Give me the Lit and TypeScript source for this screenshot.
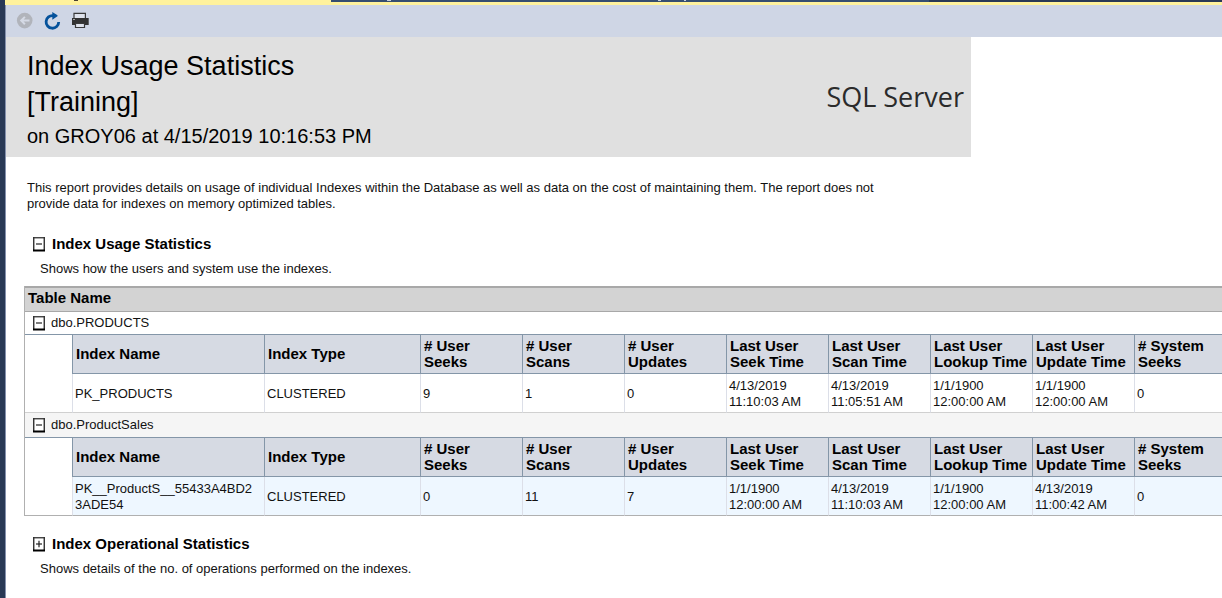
import { LitElement, html, svg, css, nothing } from "lit";
import { customElement, property, state } from "lit/decorators.js";
import { classMap } from "lit/directives/class-map.js";

interface IndexRow {
  name: string;
  type: string;
  values: string[][];
}

interface TableGroup {
  name: string;
  rows: IndexRow[];
}

const COLUMNS: string[][] = [
  ["Index Name"],
  ["Index Type"],
  ["# User", "Seeks"],
  ["# User", "Scans"],
  ["# User", "Updates"],
  ["Last User", "Seek Time"],
  ["Last User", "Scan Time"],
  ["Last User", "Lookup Time"],
  ["Last User", "Update Time"],
  ["# System", "Seeks"],
];

const GROUPS: TableGroup[] = [
  {
    name: "dbo.PRODUCTS",
    rows: [
      {
        name: "PK_PRODUCTS",
        type: "CLUSTERED",
        values: [
          ["9"],
          ["1"],
          ["0"],
          ["4/13/2019", "11:10:03 AM"],
          ["4/13/2019", "11:05:51 AM"],
          ["1/1/1900", "12:00:00 AM"],
          ["1/1/1900", "12:00:00 AM"],
          ["0"],
        ],
      },
    ],
  },
  {
    name: "dbo.ProductSales",
    rows: [
      {
        name: "PK__ProductS__55433A4BD23ADE54",
        type: "CLUSTERED",
        values: [
          ["0"],
          ["11"],
          ["7"],
          ["1/1/1900", "12:00:00 AM"],
          ["4/13/2019", "11:10:03 AM"],
          ["1/1/1900", "12:00:00 AM"],
          ["4/13/2019", "11:00:42 AM"],
          ["0"],
        ],
      },
    ],
  },
];

const lines = (parts: string[]) =>
  parts.map((part, i) => (i ? html`<br />${part}` : part));

@customElement("expand-toggle")
class ExpandToggle extends LitElement {
  @property({ type: Boolean }) open = false;
  @property() label = "";

  static styles = css`
    :host {
      display: block;
      flex: none;
    }
    button {
      display: block;
      padding: 0;
      border: 0;
      background: none;
      cursor: pointer;
    }
    svg {
      display: block;
    }
  `;

  render() {
    return html`<button aria-label=${this.label} aria-expanded=${this.open ? "true" : "false"}>
      <svg width="12" height="15" viewBox="0 0 12 15">
        <rect x="1" y="1" width="10" height="12" fill="#fff" />
        <path d="M.75 0V14M11.25 0V14" stroke="#222" stroke-width="1.3" />
        <path d="M0 .75H12" stroke="#333" stroke-width="1.3" />
        <path d="M0 13.5H12" stroke="#000" stroke-width="2" />
        <path d="M3 7H9" stroke="#222" stroke-width="1.2" />
        ${this.open ? nothing : svg`<path d="M6 3.7V10.3" stroke="#222" stroke-width="1.2" />`}
      </svg>
    </button>`;
  }
}

@customElement("report-toolbar")
class ReportToolbar extends LitElement {
  static styles = css`
    :host {
      display: flex;
      align-items: center;
      gap: 8px;
      height: 32px;
      padding: 0 10px;
      background: #cfd6e5;
    }
    button {
      display: block;
      width: 20px;
      height: 20px;
      padding: 0;
      border: 0;
      background: none;
    }
    svg {
      display: block;
    }
  `;

  render() {
    return html`
      <button aria-label="Back" disabled>
        <svg width="20" height="20" viewBox="0 0 20 20">
          <circle cx="8.7" cy="9.6" r="7.8" fill="#b1b4bb" />
          <path d="M13.5 9.6H5.5M8.9 5.9L5.2 9.6L8.9 13.3" fill="none" stroke="#d5dae5" stroke-width="2" />
        </svg>
      </button>
      <button aria-label="Refresh">
        <svg width="20" height="20" viewBox="0 0 20 20">
          <path d="M9.3 4.7A6.3 6.3 0 1 0 14.7 11" fill="none" stroke="#05529b" stroke-width="2.8" />
          <path d="M8.3 1L13.5 4.2V5.2L8.3 8.7Z" fill="#05529b" />
        </svg>
      </button>
      <button aria-label="Print">
        <svg width="20" height="20" viewBox="0 0 20 20">
          <path d="M2 7V2.4H13.4V7" fill="#dfe3ec" stroke="#3a3a3a" stroke-width="1.2" />
          <path d="M-1 7H16.7V14H-1Z" fill="#333" />
          <path d="M1 8.5H3" stroke="#aaa" stroke-width="1" />
          <path d="M3.5 12.5H12.5V16.5H3.5Z" fill="#dfe3ec" stroke="#3a3a3a" stroke-width="1.2" />
        </svg>
      </button>
    `;
  }
}

@customElement("app-root")
class AppRoot extends LitElement {
  @state() private collapsed = new Set<string>();
  @state() private usageOpen = true;

  static styles = css`
    :host {
      display: block;
      box-sizing: border-box;
      min-height: 100vh;
      overflow: hidden;
      background: #fff;
      border-left: 5px solid #293955;
      color: #111;
      font: 13px/16px "Liberation Sans", Arial, sans-serif;
    }
    .tabs {
      display: flex;
      height: 2px;
      background: #364e6f;
      border-bottom: 3px solid #fff29d;
    }
    .tab-active {
      width: 326px;
      background: #fff29d;
    }
    .tab-idle {
      width: 598px;
    }
    .tab-rest {
      flex: 1;
      background: #293955;
    }
    .tabs svg {
      display: block;
    }
    .page {
      box-sizing: border-box;
      min-height: calc(100vh - 5px);
      border-left: 1px solid #8591ad;
    }
    .banner {
      display: flex;
      align-items: center;
      justify-content: space-between;
      box-sizing: border-box;
      max-width: 965px;
      height: 120px;
      padding: 0 7px 0 21px;
      background: #e0e0e0;
    }
    .banner-text {
      padding-top: 6px;
    }
    .banner h1,
    .banner p {
      margin: 0;
      font-weight: 400;
      color: #000;
    }
    .banner h1 {
      font-size: 27px;
      line-height: 36px;
    }
    .banner p {
      font-size: 20px;
      line-height: 32px;
    }
    .brand {
      font: 27px/36px "Open Sans", sans-serif;
      color: #2b2b2b;
    }
    .intro {
      max-width: 880px;
      margin: 23px 0 24px 21px;
    }
    .section-title {
      display: flex;
      align-items: center;
      gap: 7px;
      margin: 0 0 9px 27px;
      font-size: 15px;
      line-height: 16px;
      color: #000;
    }
    .section-note {
      margin: 0 0 9px 34px;
    }
    .data {
      width: calc(100% - 18px);
      margin: 0 0 20px 18px;
      table-layout: fixed;
      border-collapse: separate;
      border-spacing: 0;
      border-left: 1px solid #b0b0b0;
    }
    .col-indent {
      width: 47px;
    }
    .col-name {
      width: 192px;
    }
    .col-type {
      width: 156px;
    }
    .col-value {
      width: 102px;
    }
    th,
    td {
      box-sizing: border-box;
      padding: 0 0 0 3px;
      text-align: left;
      vertical-align: middle;
    }
    th {
      font-size: 15px;
      color: #000;
    }
    .title th {
      height: 26px;
      padding-bottom: 3px;
      background: #d3d3d3;
      border-top: 2px solid #a8a8a8;
      border-bottom: 1px solid #a8a8a8;
    }
    .group td {
      height: 23px;
      padding-left: 8px;
      border-bottom: 1px solid #8496a8;
    }
    .group.alt td {
      height: 25px;
      background: #f5f5f5;
    }
    .group-name {
      display: flex;
      align-items: center;
      gap: 6px;
    }
    .heads th {
      height: 39px;
      background: #d6dae3;
      border-left: 1px solid #8496a8;
      border-bottom: 1px solid #8496a8;
    }
    .record td {
      height: 39px;
      padding: 2px 6px 0 2px;
      overflow-wrap: anywhere;
      border-left: 1px solid #dcdfe8;
      border-bottom: 1px solid #d0d0d0;
    }
    .record.alt td {
      background: #eef7ff;
      border-bottom-color: #b0b0b0;
    }
    .heads .indent,
    .record .indent,
    .record.alt .indent {
      background: #fff;
      border-left: 0;
    }
    .heads .indent {
      border-bottom: 0;
    }
  `;

  private toggleGroup(name: string) {
    const next = new Set(this.collapsed);
    next.has(name) ? next.delete(name) : next.add(name);
    this.collapsed = next;
  }

  private renderGroup(group: TableGroup, index: number) {
    const alt = index % 2 === 1;
    const open = !this.collapsed.has(group.name);
    return html`
      <tr class=${classMap({ group: true, alt })}>
        <td colspan="11">
          <div class="group-name">
            <expand-toggle
              .open=${open}
              .label=${group.name}
              @click=${() => this.toggleGroup(group.name)}
            ></expand-toggle>
            <span>${group.name}</span>
          </div>
        </td>
      </tr>
      ${open
        ? html`
            <tr class="heads">
              <td class="indent"></td>
              ${COLUMNS.map((c) => html`<th scope="col">${lines(c)}</th>`)}
            </tr>
            ${group.rows.map(
              (row) => html`<tr class=${classMap({ record: true, alt })}>
                <td class="indent"></td>
                <td>${row.name}</td>
                <td>${row.type}</td>
                ${row.values.map((v) => html`<td>${lines(v)}</td>`)}
              </tr>`
            )}
          `
        : nothing}
    `;
  }

  render() {
    return html`
      <div class="tabs">
        <div class="tab-active">
          <svg width="326" height="2"><path d="M69 .5H73" stroke="#4a4030" /></svg>
        </div>
        <div class="tab-idle">
          <svg width="598" height="2">
            <path d="M56 .5H60M327 .5H330M353 .5H355" stroke="#c8d0dc" />
          </svg>
        </div>
        <div class="tab-rest"></div>
      </div>
      <div class="page">
        <report-toolbar></report-toolbar>
        <header class="banner">
          <div class="banner-text">
            <h1>Index Usage Statistics<br />[Training]</h1>
            <p>on GROY06 at 4/15/2019 10:16:53 PM</p>
          </div>
          <div class="brand">SQL Server</div>
        </header>
        <p class="intro">
          This report provides details on usage of individual Indexes within the Database as well as
          data on the cost of maintaining them. The report does not provide data for indexes on
          memory optimized tables.
        </p>
        <h2 class="section-title">
          <expand-toggle
            .open=${this.usageOpen}
            label="Index Usage Statistics"
            @click=${() => (this.usageOpen = !this.usageOpen)}
          ></expand-toggle>
          Index Usage Statistics
        </h2>
        <p class="section-note">Shows how the users and system use the indexes.</p>
        ${this.usageOpen
          ? html`<table class="data">
              <colgroup>
                <col class="col-indent" />
                <col class="col-name" />
                <col class="col-type" />
                ${COLUMNS.slice(3).map(() => html`<col class="col-value" />`)}
                <col />
              </colgroup>
              <tbody>
                <tr class="title">
                  <th colspan="11">Table Name</th>
                </tr>
                ${GROUPS.map((g, i) => this.renderGroup(g, i))}
              </tbody>
            </table>`
          : nothing}
        <h2 class="section-title">
          <expand-toggle label="Index Operational Statistics"></expand-toggle>
          Index Operational Statistics
        </h2>
        <p class="section-note">
          Shows details of the no. of operations performed on the indexes.
        </p>
      </div>
    `;
  }
}
